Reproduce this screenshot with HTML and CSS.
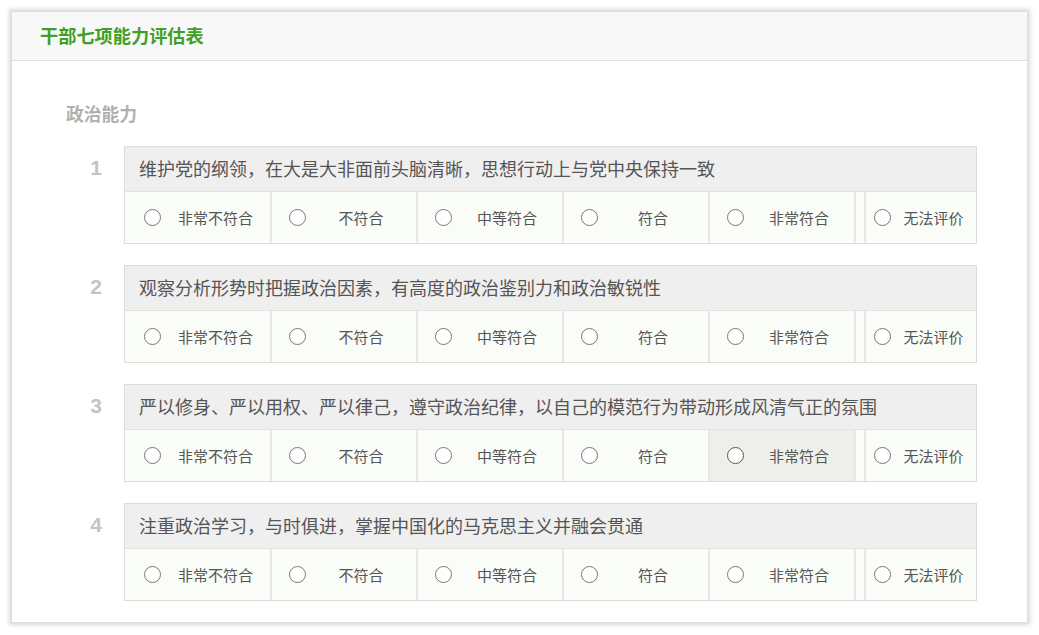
FILE: index.html
```html
<!DOCTYPE html>
<html lang="zh">
<head>
<meta charset="utf-8">
<title>干部七项能力评估表</title>
<link rel="stylesheet" href="styles.css">
</head>
<body>
<div class="card">
  <div class="card-head">干部七项能力评估表</div>
  <div class="card-body">
    <div class="section-title">政治能力</div>

    <div class="q">
      <div class="q-num">1</div>
      <div class="q-table">
        <div class="q-text">维护党的纲领，在大是大非面前头脑清晰，思想行动上与党中央保持一致</div>
        <div class="opts">
          <div class="opt"><span class="radio"></span><span class="lbl">非常不符合</span></div>
          <div class="opt"><span class="radio"></span><span class="lbl">不符合</span></div>
          <div class="opt"><span class="radio"></span><span class="lbl">中等符合</span></div>
          <div class="opt"><span class="radio"></span><span class="lbl">符合</span></div>
          <div class="opt"><span class="radio"></span><span class="lbl">非常符合</span></div>
          <div class="opt-gap"></div>
          <div class="opt opt-last"><span class="radio"></span><span class="lbl">无法评价</span></div>
        </div>
      </div>
    </div>

    <div class="q">
      <div class="q-num">2</div>
      <div class="q-table">
        <div class="q-text">观察分析形势时把握政治因素，有高度的政治鉴别力和政治敏锐性</div>
        <div class="opts">
          <div class="opt"><span class="radio"></span><span class="lbl">非常不符合</span></div>
          <div class="opt"><span class="radio"></span><span class="lbl">不符合</span></div>
          <div class="opt"><span class="radio"></span><span class="lbl">中等符合</span></div>
          <div class="opt"><span class="radio"></span><span class="lbl">符合</span></div>
          <div class="opt"><span class="radio"></span><span class="lbl">非常符合</span></div>
          <div class="opt-gap"></div>
          <div class="opt opt-last"><span class="radio"></span><span class="lbl">无法评价</span></div>
        </div>
      </div>
    </div>

    <div class="q">
      <div class="q-num">3</div>
      <div class="q-table">
        <div class="q-text">严以修身、严以用权、严以律己，遵守政治纪律，以自己的模范行为带动形成风清气正的氛围</div>
        <div class="opts">
          <div class="opt"><span class="radio"></span><span class="lbl">非常不符合</span></div>
          <div class="opt"><span class="radio"></span><span class="lbl">不符合</span></div>
          <div class="opt"><span class="radio"></span><span class="lbl">中等符合</span></div>
          <div class="opt"><span class="radio"></span><span class="lbl">符合</span></div>
          <div class="opt opt-hover"><span class="radio radio-dark"></span><span class="lbl">非常符合</span></div>
          <div class="opt-gap"></div>
          <div class="opt opt-last"><span class="radio"></span><span class="lbl">无法评价</span></div>
        </div>
      </div>
    </div>

    <div class="q">
      <div class="q-num">4</div>
      <div class="q-table">
        <div class="q-text">注重政治学习，与时俱进，掌握中国化的马克思主义并融会贯通</div>
        <div class="opts">
          <div class="opt"><span class="radio"></span><span class="lbl">非常不符合</span></div>
          <div class="opt"><span class="radio"></span><span class="lbl">不符合</span></div>
          <div class="opt"><span class="radio"></span><span class="lbl">中等符合</span></div>
          <div class="opt"><span class="radio"></span><span class="lbl">符合</span></div>
          <div class="opt"><span class="radio"></span><span class="lbl">非常符合</span></div>
          <div class="opt-gap"></div>
          <div class="opt opt-last"><span class="radio"></span><span class="lbl">无法评价</span></div>
        </div>
      </div>
    </div>
  </div>
</div>
</body>
</html>
```
FILE: styles.css
```css
* { box-sizing: border-box; }
html, body { margin: 0; padding: 0; background: #fff; }
body {
  padding: 12px;
  font-family: "Noto Sans CJK SC", "Noto Sans", sans-serif;
  color: #555;
}
.card {
  background: #fff;
  box-shadow: 0 0 4px 3px rgba(0, 0, 0, 0.15);
  height: 610px;
}
.card-head {
  height: 49px;
  line-height: 46px;
  padding-left: 28px;
  background: #f8f8f8;
  border-bottom: 1px solid #dedede;
  color: #3fa024;
  font-size: 18.2px;
  font-weight: bold;
}
.card-body {
  padding: 40px 50px 0 54px;
}
.section-title {
  font-size: 17.8px;
  font-weight: bold;
  color: #b0b0b0;
  line-height: 24px;
  margin-bottom: 21px;
}
.q {
  display: flex;
  margin-bottom: 21px;
}
.q-num {
  width: 58px;
  padding-right: 22px;
  text-align: right;
  font-family: "Liberation Sans", Arial, sans-serif;
  font-size: 21px;
  font-weight: bold;
  color: #c4c4c4;
  line-height: 43px;
}
.q-table {
  width: 853px;
  border: 1px solid #dcdcdc;
}
.q-text {
  height: 45px;
  line-height: 43px;
  padding-left: 14px;
  background: #efefef;
  font-size: 18px;
  color: #555;
  border-bottom: 1px solid #e2e2e2;
}
.opts {
  display: flex;
  height: 51px;
  background: #f9fcf7;
}
.opt {
  width: 146px;
  display: flex;
  align-items: center;
  padding-left: 17px;
  border-left: 2px solid #e6e6e6;
}
.opt:first-child {
  width: 145px;
  border-left: none;
  padding-left: 19px;
}
.opt-gap {
  width: 10px;
  border-left: 2px solid #e6e6e6;
}
.opt.opt-last {
  width: auto;
  flex: 1;
  padding-left: 8px;
}
.opt-hover { background: #eeefeb; }
.radio {
  width: 17px;
  height: 17px;
  border-radius: 50%;
  border: 1.3px solid #777;
  background: #fff;
  flex: none;
}
.radio-dark { border-color: #555; }
.lbl {
  flex: 1;
  text-align: center;
  font-size: 15px;
  color: #555;
}
```
